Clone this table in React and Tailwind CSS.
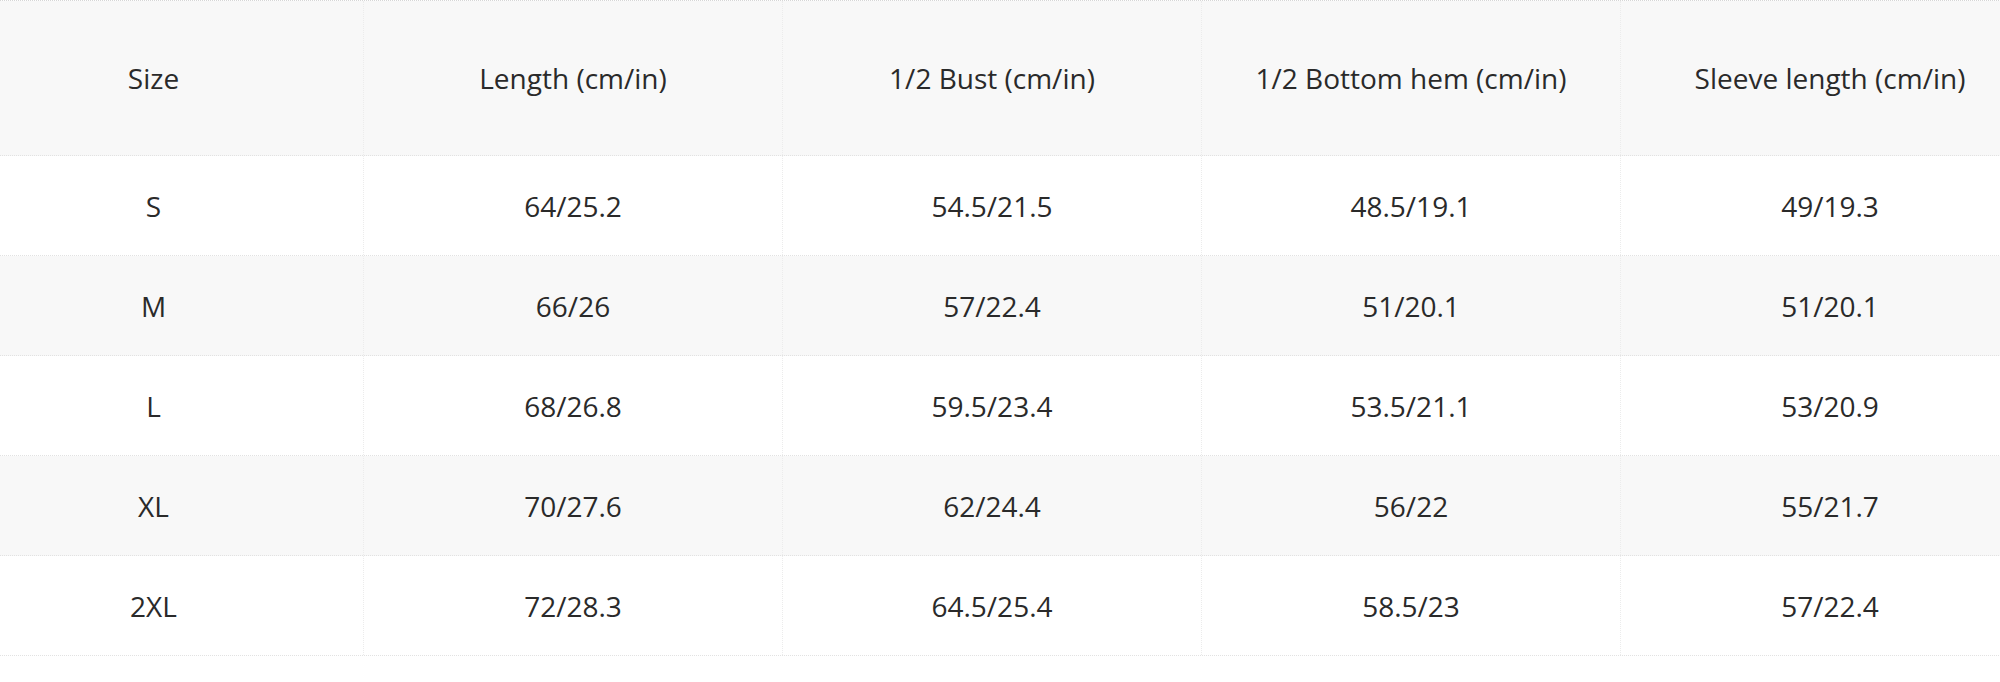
const headers = [
  "Size",
  "Length (cm/in)",
  "1/2 Bust (cm/in)",
  "1/2 Bottom hem (cm/in)",
  "Sleeve length (cm/in)",
];

const rows = [
  ["S", "64/25.2", "54.5/21.5", "48.5/19.1", "49/19.3"],
  ["M", "66/26", "57/22.4", "51/20.1", "51/20.1"],
  ["L", "68/26.8", "59.5/23.4", "53.5/21.1", "53/20.9"],
  ["XL", "70/27.6", "62/24.4", "56/22", "55/21.7"],
  ["2XL", "72/28.3", "64.5/25.4", "58.5/23", "57/22.4"],
];

export default function App() {
  return (
    <div
      className="w-[2000px] h-[682px] overflow-hidden bg-white text-[#2a2a2a]"
      style={{ fontFamily: '"Open Sans", "Noto Sans", sans-serif' }}
    >
      <div className="w-[2095px] -ml-[56px] border-t border-dotted border-[#d6d6d6]">
        <div className="grid grid-cols-5 h-[155px] bg-[#f8f8f8] border-b border-dotted border-[#e2e2e2]">
          {headers.map((h, i) => (
            <div
              key={h}
              className={`flex items-center justify-center text-[28px] ${
                i > 0 ? "border-l border-dotted border-[#ececec]" : ""
              }`}
            >
              {h}
            </div>
          ))}
        </div>
        {rows.map((row, r) => (
          <div
            key={row[0]}
            className={`grid grid-cols-5 h-[100px] border-b border-dotted border-[#e2e2e2] ${
              r % 2 === 1 ? "bg-[#f8f8f8]" : "bg-white"
            }`}
          >
            {row.map((cell, i) => (
              <div
                key={i}
                className={`flex items-center justify-center text-[28px] ${
                  i > 0 ? "border-l border-dotted border-[#ececec]" : ""
                }`}
              >
                {cell}
              </div>
            ))}
          </div>
        ))}
      </div>
    </div>
  );
}
